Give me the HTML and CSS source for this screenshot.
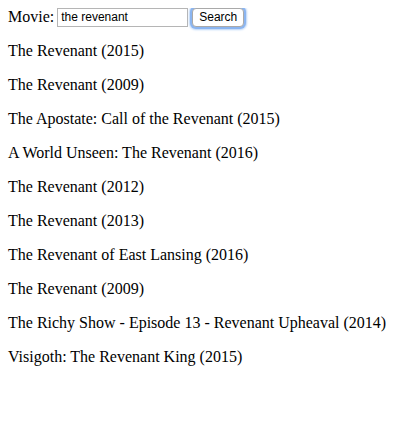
FILE: index.html
```html
<!DOCTYPE html>
<html>
<head>
<meta charset="utf-8">
<link rel="stylesheet" href="styles.css">
</head>
<body>
<form class="search">
  <label class="label">Movie:</label>
  <input class="field" type="text" value="the revenant">
  <button class="btn" type="button">Search</button>
</form>
<div class="results">
  <p class="item">The Revenant (2015)</p>
  <p class="item">The Revenant (2009)</p>
  <p class="item">The Apostate: Call of the Revenant (2015)</p>
  <p class="item">A World Unseen: The Revenant (2016)</p>
  <p class="item">The Revenant (2012)</p>
  <p class="item">The Revenant (2013)</p>
  <p class="item">The Revenant of East Lansing (2016)</p>
  <p class="item">The Revenant (2009)</p>
  <p class="item">The Richy Show - Episode 13 - Revenant Upheaval (2014)</p>
  <p class="item">Visigoth: The Revenant King (2015)</p>
</div>
</body>
</html>
```

FILE: styles.css
```css
html, body {
  background: #fff;
}
body {
  margin: 8px;
  font-family: "Liberation Serif", "Times New Roman", serif;
  font-size: 16px;
  color: #000;
}
.search {
  display: flex;
  align-items: center;
  height: 18px;
  margin: 0;
}
.label {
  margin-right: 3px;
}
.field {
  box-sizing: border-box;
  width: 131px;
  height: 19px;
  margin: 0;
  padding: 1px 3px;
  border: 1px solid #b5b5b5;
  font-family: "Liberation Sans", Arial, sans-serif;
  font-size: 12px;
  color: #000;
  background: #fff;
  outline: none;
}
.btn {
  box-sizing: border-box;
  width: 52px;
  height: 19px;
  margin-left: 4px;
  padding: 0;
  border: 1px solid #a9a9a9;
  border-radius: 4px;
  background: #fff;
  font-family: "Liberation Sans", Arial, sans-serif;
  font-size: 12px;
  color: #000;
  box-shadow: 0 0 0 2px #8bb5f0, 0 0 2px 3px #b8d3f7;
}
.results {
  margin-top: 15px;
}
.item {
  margin: 16px 0;
  line-height: 18px;
}
```
